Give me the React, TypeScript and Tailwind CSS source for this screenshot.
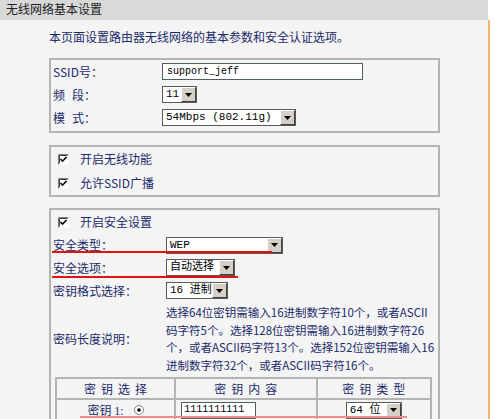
import type { ReactNode } from 'react';

const navy = 'text-[#1b2a6b]';

function Arrow() {
  return (
    <span className="flex h-full w-[15px] shrink-0 items-center justify-center border border-t-white border-l-white border-r-[#404040] border-b-[#404040] bg-[#d4d0c8]">
      <svg width="7" height="4" viewBox="0 0 7 4">
        <path d="M0 0h7L3.5 4z" fill="#000" />
      </svg>
    </span>
  );
}

function Select({ value, className }: { value: string; className: string }) {
  return (
    <div className={`flex h-[17px] items-center justify-between border border-[#5b5b5b] bg-white ${className}`}>
      <span className="whitespace-nowrap pl-[3px] font-['Liberation_Mono','Noto_Sans_CJK_SC',monospace] text-[11px] leading-[15px] text-black">
        {value}
      </span>
      <Arrow />
    </div>
  );
}

function Checkbox() {
  return (
    <svg width="11" height="11" viewBox="0 0 11 11" className="shrink-0">
      <rect x="0" y="0" width="11" height="11" fill="#fff" />
      <path d="M0.5 10.5V0.5h10" stroke="#808080" fill="none" />
      <path d="M1.5 9.5V1.5h8" stroke="#404040" fill="none" />
      <path d="M2.5 5l2 2.2L8.5 3" stroke="#000" strokeWidth="1.6" fill="none" />
    </svg>
  );
}

function Radio() {
  return (
    <svg width="10" height="10" viewBox="0 0 10 10" className="shrink-0">
      <circle cx="5" cy="5" r="4.5" fill="#fff" stroke="#808080" />
      <circle cx="5" cy="5" r="1.8" fill="#000" />
    </svg>
  );
}

function Row({ label, h, labelW, children }: { label: ReactNode; h: string; labelW: string; children: ReactNode }) {
  return (
    <div className={`flex items-center ${h}`}>
      <span className={`${labelW} shrink-0 pl-[2px] ${navy}`}>{label}</span>
      {children}
    </div>
  );
}

function CheckRow({ label }: { label: string }) {
  return (
    <div className="flex h-[24px] items-center gap-[11px] pl-[7px]">
      <Checkbox />
      <span className={navy}>{label}</span>
    </div>
  );
}

function Gap() {
  return <span className="inline-block w-[7px]" />;
}

export default function App() {
  return (
    <div className="h-[419px] w-[500px] overflow-hidden bg-white font-['Noto_Sans_CJK_SC',sans-serif] text-[12px] leading-[14px]">
      <div className="h-[20px] w-[488px] bg-[#d9d9d9] pl-[6px] text-[12px] leading-[18px] text-[#222]">
        无线网络基本设置
      </div>

      <div className="h-[399px] w-[490px] border-r-2 border-[#f3b56c] bg-[#f4f4f4] pt-[10px]">
        <p className={`ml-[49px] ${navy}`}>本页面设置路由器无线网络的基本参数和安全认证选项。</p>

        {/* basic */}
        <div className="ml-[49px] mt-[14px] w-[391px] border-2 border-[#b4b4b4] pb-[2px]">
          <Row label="SSID号：" h="h-[23px]" labelW="w-[111px]">
            <div className="flex h-[17px] w-[201px] items-center border border-[#4f5f5f] bg-white pl-[4px] font-['Liberation_Mono',monospace] text-[10px] text-black">
              support_jeff
            </div>
          </Row>
          <Row label={<>频<Gap />段：</>} h="h-[23px]" labelW="w-[111px]">
            <Select value="11" className="w-[35px]" />
          </Row>
          <Row label={<>模<Gap />式：</>} h="h-[23px]" labelW="w-[111px]">
            <Select value="54Mbps (802.11g)" className="w-[134px]" />
          </Row>
        </div>

        {/* switches */}
        <div className="ml-[49px] mt-[12px] w-[391px] border-2 border-[#b4b4b4]">
          <CheckRow label="开启无线功能" />
          <CheckRow label="允许SSID广播" />
        </div>

        {/* security */}
        <div className="relative ml-[49px] mt-[11px] w-[391px] border-2 border-b-0 border-[#b4b4b4]">
          <CheckRow label="开启安全设置" />
          <Row label="安全类型：" h="h-[22px]" labelW="w-[115px]">
            <Select value="WEP" className="w-[117px]" />
          </Row>
          <Row label="安全选项：" h="h-[23px]" labelW="w-[115px]">
            <Select value="自动选择" className="w-[69px]" />
          </Row>
          <Row label="密钥格式选择：" h="h-[23px]" labelW="w-[115px]">
            <Select value="16 进制" className="w-[62px]" />
          </Row>

          <div className="mt-[2px] flex items-center">
            <span className={`w-[115px] shrink-0 pl-[2px] ${navy}`}>密码长度说明：</span>
            <p className={`whitespace-nowrap text-[11.5px] leading-[17.5px] ${navy}`}>
              选择64位密钥需输入16进制数字符10个，或者ASCII
              <br />
              码字符5个。选择128位密钥需输入16进制数字符26
              <br />
              个，或者ASCII码字符13个。选择152位密钥需输入16
              <br />
              进制数字符32个，或者ASCII码字符16个。
            </p>
          </div>

          <table className={`ml-[4px] mt-[3px] w-[377px] border-collapse ${navy}`}>
            <thead>
              <tr className="h-[21px]">
                <th className="w-[120px] border-2 border-[#b4b4b4] font-normal">
                  <span className="mr-[-5px] tracking-[5px]">密钥选择</span>
                </th>
                <th className="w-[142px] border-2 border-[#b4b4b4] font-normal">
                  <span className="mr-[-5px] tracking-[5px]">密钥内容</span>
                </th>
                <th className="w-[115px] border-2 border-[#b4b4b4] font-normal">
                  <span className="mr-[-5px] tracking-[5px]">密钥类型</span>
                </th>
              </tr>
            </thead>
            <tbody>
              <tr className="h-[22px]">
                <td className="border-2 border-[#b4b4b4]">
                  <div className="flex items-center justify-center gap-[10px]">
                    <span>
                      密钥 <span className="font-['Liberation_Serif',serif]">1:</span>
                    </span>
                    <Radio />
                  </div>
                </td>
                <td className="border-2 border-[#b4b4b4] pl-[5px]">
                  <div className="flex h-[17px] w-[75px] items-center border border-[#4f5f5f] bg-white pl-[2px] font-['Liberation_Mono',monospace] text-[10px] text-black">
                    1111111111
                  </div>
                </td>
                <td className="border-2 border-[#b4b4b4]">
                  <div className="flex justify-center">
                    <Select value="64 位" className="w-[56px]" />
                  </div>
                </td>
              </tr>
            </tbody>
          </table>

          {/* red marks */}
          <div className="absolute left-[1px] top-[41px] h-[2px] w-[220px] bg-[#e31010]" />
          <div className="absolute left-[1px] top-[66px] h-[2px] w-[186px] bg-[#e31010]" />
          <div className="absolute left-[29px] top-[206px] h-[2px] w-[327px] bg-[#ef8d8d]" />
        </div>
      </div>
    </div>
  );
}
